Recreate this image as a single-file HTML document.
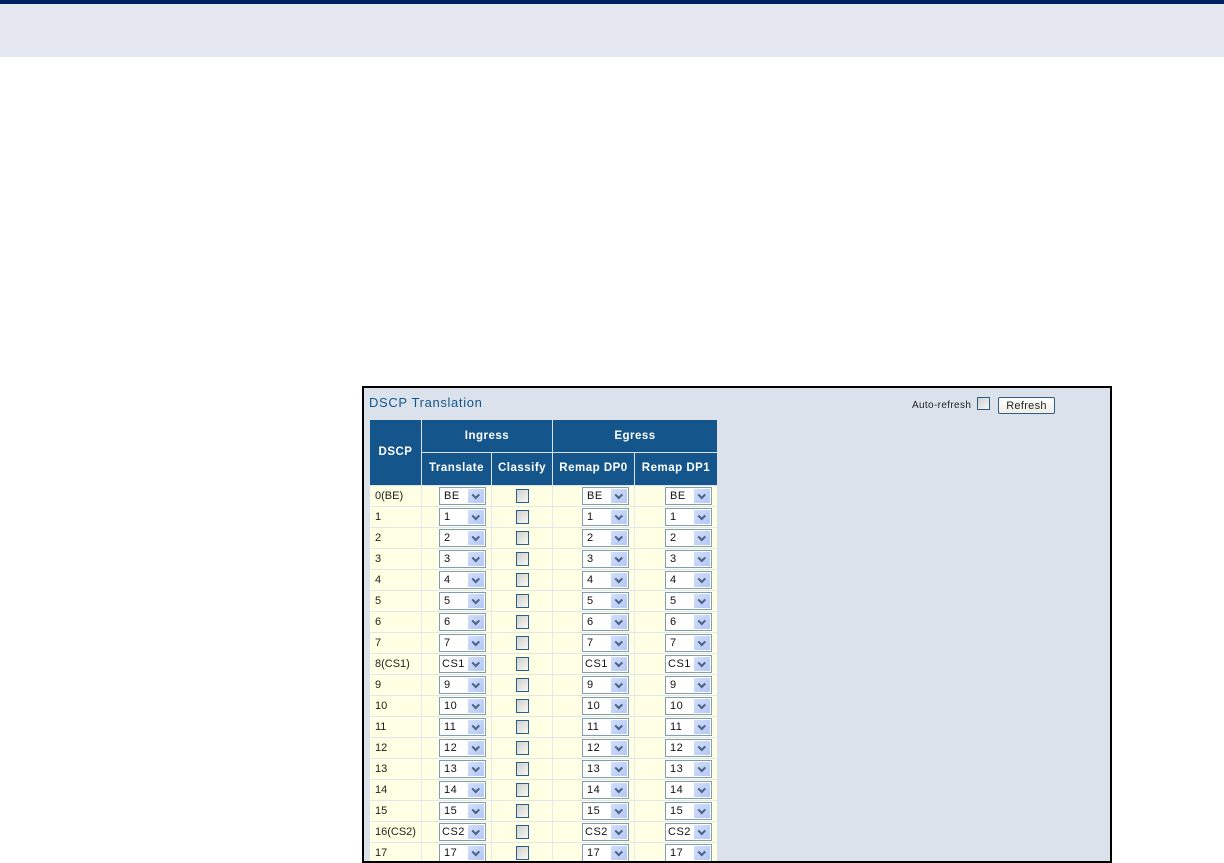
<!DOCTYPE html>
<html><head><meta charset="utf-8"><style>
html,body{margin:0;padding:0;background:#fff;width:1224px;height:863px;overflow:hidden;font-family:"Liberation Sans",sans-serif}
div,span,i,b,u{position:absolute;display:block;font-style:normal;text-decoration:none;box-sizing:border-box}
#top{left:0;top:0;width:1224px;height:4px;background:#002060}
#band{left:0;top:4px;width:1224px;height:53px;background:#e4e7f0}
#frame{left:362px;top:386px;width:750px;height:477px;background:#dbe2eb;border:2px solid #000}
#title{left:369px;top:395px;font-size:13px;color:#14568c;white-space:nowrap;letter-spacing:.65px}
.h{background:#14568c;color:#fff;font-weight:bold;font-size:11.5px;text-align:center;letter-spacing:.5px;white-space:nowrap}
.r{left:370px;width:347px;height:21px;background:#ffffe3;border-bottom:1px solid #dfe6ee}
.v{top:0;width:1px;height:20px;background:#e6eaee}
.l{left:5px;top:3px;font-size:11px;line-height:14px;color:#222;white-space:nowrap}
.s{top:1px;width:47px;height:18px;background:#fff;border:1px solid #7f9db9;font-size:11px;line-height:16px;padding-left:4px;color:#111;letter-spacing:.5px}
.a{left:69px}.b{left:212px}.c{left:295px}
.z{padding-left:2px}
.s u{right:1px;top:1px;width:16px;height:14px;background:linear-gradient(135deg,#d2dffb,#b4c7f4)}
.s u::after{content:"";position:absolute;left:5px;top:2.5px;width:3.5px;height:3.5px;border-right:2px solid #4d6185;border-bottom:2px solid #4d6185;transform:rotate(45deg)}
.k{left:146px;top:3px;width:13px;height:14px;background:linear-gradient(135deg,#d0d0ca,#f8f8f6);border:1px solid #2a5f8c}
</style></head><body>
<div id="top"></div><div id="band"></div>
<div id="frame"></div>
<div id="title">DSCP Translation</div>
<div style="left:912px;top:400px;font-size:10px;color:#222;white-space:nowrap;letter-spacing:.35px">Auto-refresh</div>
<div style="left:977px;top:397px;width:13px;height:13px;background:linear-gradient(135deg,#d0d0ca,#f8f8f6);border:1px solid #2a5f8c"></div>
<div style="left:998px;top:397px;width:57px;height:17px;background:linear-gradient(#fff,#f0f0e6);border:1px solid #2f5d8a;border-radius:2px;font-size:11px;line-height:16px;text-align:center;color:#222;letter-spacing:.3px">Refresh</div>

<div class="h" style="left:370px;top:420px;width:51px;height:65px;line-height:64px">DSCP</div>
<div class="h" style="left:422px;top:420px;width:130px;height:32px;line-height:32px">Ingress</div>
<div class="h" style="left:553px;top:420px;width:164px;height:32px;line-height:32px">Egress</div>
<div class="h" style="left:422px;top:453px;width:69px;height:32px;line-height:31px">Translate</div>
<div class="h" style="left:492px;top:453px;width:60px;height:32px;line-height:31px">Classify</div>
<div class="h" style="left:553px;top:453px;width:81px;height:32px;line-height:31px">Remap DP0</div>
<div class="h" style="left:635px;top:453px;width:82px;height:32px;line-height:31px">Remap DP1</div>

<div class="r" style="top:486px"><b class="v" style="left:51px"></b><b class="v" style="left:121px"></b><b class="v" style="left:182px"></b><b class="v" style="left:264px"></b><i class="l">0(BE)</i><span class="s a">BE<u></u></span><i class="k"></i><span class="s b">BE<u></u></span><span class="s c">BE<u></u></span></div>
<div class="r" style="top:507px"><b class="v" style="left:51px"></b><b class="v" style="left:121px"></b><b class="v" style="left:182px"></b><b class="v" style="left:264px"></b><i class="l">1</i><span class="s a">1<u></u></span><i class="k"></i><span class="s b">1<u></u></span><span class="s c">1<u></u></span></div>
<div class="r" style="top:528px"><b class="v" style="left:51px"></b><b class="v" style="left:121px"></b><b class="v" style="left:182px"></b><b class="v" style="left:264px"></b><i class="l">2</i><span class="s a">2<u></u></span><i class="k"></i><span class="s b">2<u></u></span><span class="s c">2<u></u></span></div>
<div class="r" style="top:549px"><b class="v" style="left:51px"></b><b class="v" style="left:121px"></b><b class="v" style="left:182px"></b><b class="v" style="left:264px"></b><i class="l">3</i><span class="s a">3<u></u></span><i class="k"></i><span class="s b">3<u></u></span><span class="s c">3<u></u></span></div>
<div class="r" style="top:570px"><b class="v" style="left:51px"></b><b class="v" style="left:121px"></b><b class="v" style="left:182px"></b><b class="v" style="left:264px"></b><i class="l">4</i><span class="s a">4<u></u></span><i class="k"></i><span class="s b">4<u></u></span><span class="s c">4<u></u></span></div>
<div class="r" style="top:591px"><b class="v" style="left:51px"></b><b class="v" style="left:121px"></b><b class="v" style="left:182px"></b><b class="v" style="left:264px"></b><i class="l">5</i><span class="s a">5<u></u></span><i class="k"></i><span class="s b">5<u></u></span><span class="s c">5<u></u></span></div>
<div class="r" style="top:612px"><b class="v" style="left:51px"></b><b class="v" style="left:121px"></b><b class="v" style="left:182px"></b><b class="v" style="left:264px"></b><i class="l">6</i><span class="s a">6<u></u></span><i class="k"></i><span class="s b">6<u></u></span><span class="s c">6<u></u></span></div>
<div class="r" style="top:633px"><b class="v" style="left:51px"></b><b class="v" style="left:121px"></b><b class="v" style="left:182px"></b><b class="v" style="left:264px"></b><i class="l">7</i><span class="s a">7<u></u></span><i class="k"></i><span class="s b">7<u></u></span><span class="s c">7<u></u></span></div>
<div class="r" style="top:654px"><b class="v" style="left:51px"></b><b class="v" style="left:121px"></b><b class="v" style="left:182px"></b><b class="v" style="left:264px"></b><i class="l">8(CS1)</i><span class="s a z">CS1<u></u></span><i class="k"></i><span class="s b z">CS1<u></u></span><span class="s c z">CS1<u></u></span></div>
<div class="r" style="top:675px"><b class="v" style="left:51px"></b><b class="v" style="left:121px"></b><b class="v" style="left:182px"></b><b class="v" style="left:264px"></b><i class="l">9</i><span class="s a">9<u></u></span><i class="k"></i><span class="s b">9<u></u></span><span class="s c">9<u></u></span></div>
<div class="r" style="top:696px"><b class="v" style="left:51px"></b><b class="v" style="left:121px"></b><b class="v" style="left:182px"></b><b class="v" style="left:264px"></b><i class="l">10</i><span class="s a">10<u></u></span><i class="k"></i><span class="s b">10<u></u></span><span class="s c">10<u></u></span></div>
<div class="r" style="top:717px"><b class="v" style="left:51px"></b><b class="v" style="left:121px"></b><b class="v" style="left:182px"></b><b class="v" style="left:264px"></b><i class="l">11</i><span class="s a">11<u></u></span><i class="k"></i><span class="s b">11<u></u></span><span class="s c">11<u></u></span></div>
<div class="r" style="top:738px"><b class="v" style="left:51px"></b><b class="v" style="left:121px"></b><b class="v" style="left:182px"></b><b class="v" style="left:264px"></b><i class="l">12</i><span class="s a">12<u></u></span><i class="k"></i><span class="s b">12<u></u></span><span class="s c">12<u></u></span></div>
<div class="r" style="top:759px"><b class="v" style="left:51px"></b><b class="v" style="left:121px"></b><b class="v" style="left:182px"></b><b class="v" style="left:264px"></b><i class="l">13</i><span class="s a">13<u></u></span><i class="k"></i><span class="s b">13<u></u></span><span class="s c">13<u></u></span></div>
<div class="r" style="top:780px"><b class="v" style="left:51px"></b><b class="v" style="left:121px"></b><b class="v" style="left:182px"></b><b class="v" style="left:264px"></b><i class="l">14</i><span class="s a">14<u></u></span><i class="k"></i><span class="s b">14<u></u></span><span class="s c">14<u></u></span></div>
<div class="r" style="top:801px"><b class="v" style="left:51px"></b><b class="v" style="left:121px"></b><b class="v" style="left:182px"></b><b class="v" style="left:264px"></b><i class="l">15</i><span class="s a">15<u></u></span><i class="k"></i><span class="s b">15<u></u></span><span class="s c">15<u></u></span></div>
<div class="r" style="top:822px"><b class="v" style="left:51px"></b><b class="v" style="left:121px"></b><b class="v" style="left:182px"></b><b class="v" style="left:264px"></b><i class="l">16(CS2)</i><span class="s a z">CS2<u></u></span><i class="k"></i><span class="s b z">CS2<u></u></span><span class="s c z">CS2<u></u></span></div>
<div class="r" style="top:843px;height:18px;overflow:hidden;border-bottom:0"><b class="v" style="left:51px"></b><b class="v" style="left:121px"></b><b class="v" style="left:182px"></b><b class="v" style="left:264px"></b><i class="l">17</i><span class="s a">17<u></u></span><i class="k"></i><span class="s b">17<u></u></span><span class="s c">17<u></u></span></div>
<div style="left:362px;top:861px;width:750px;height:2px;background:#000"></div>
</body></html>
